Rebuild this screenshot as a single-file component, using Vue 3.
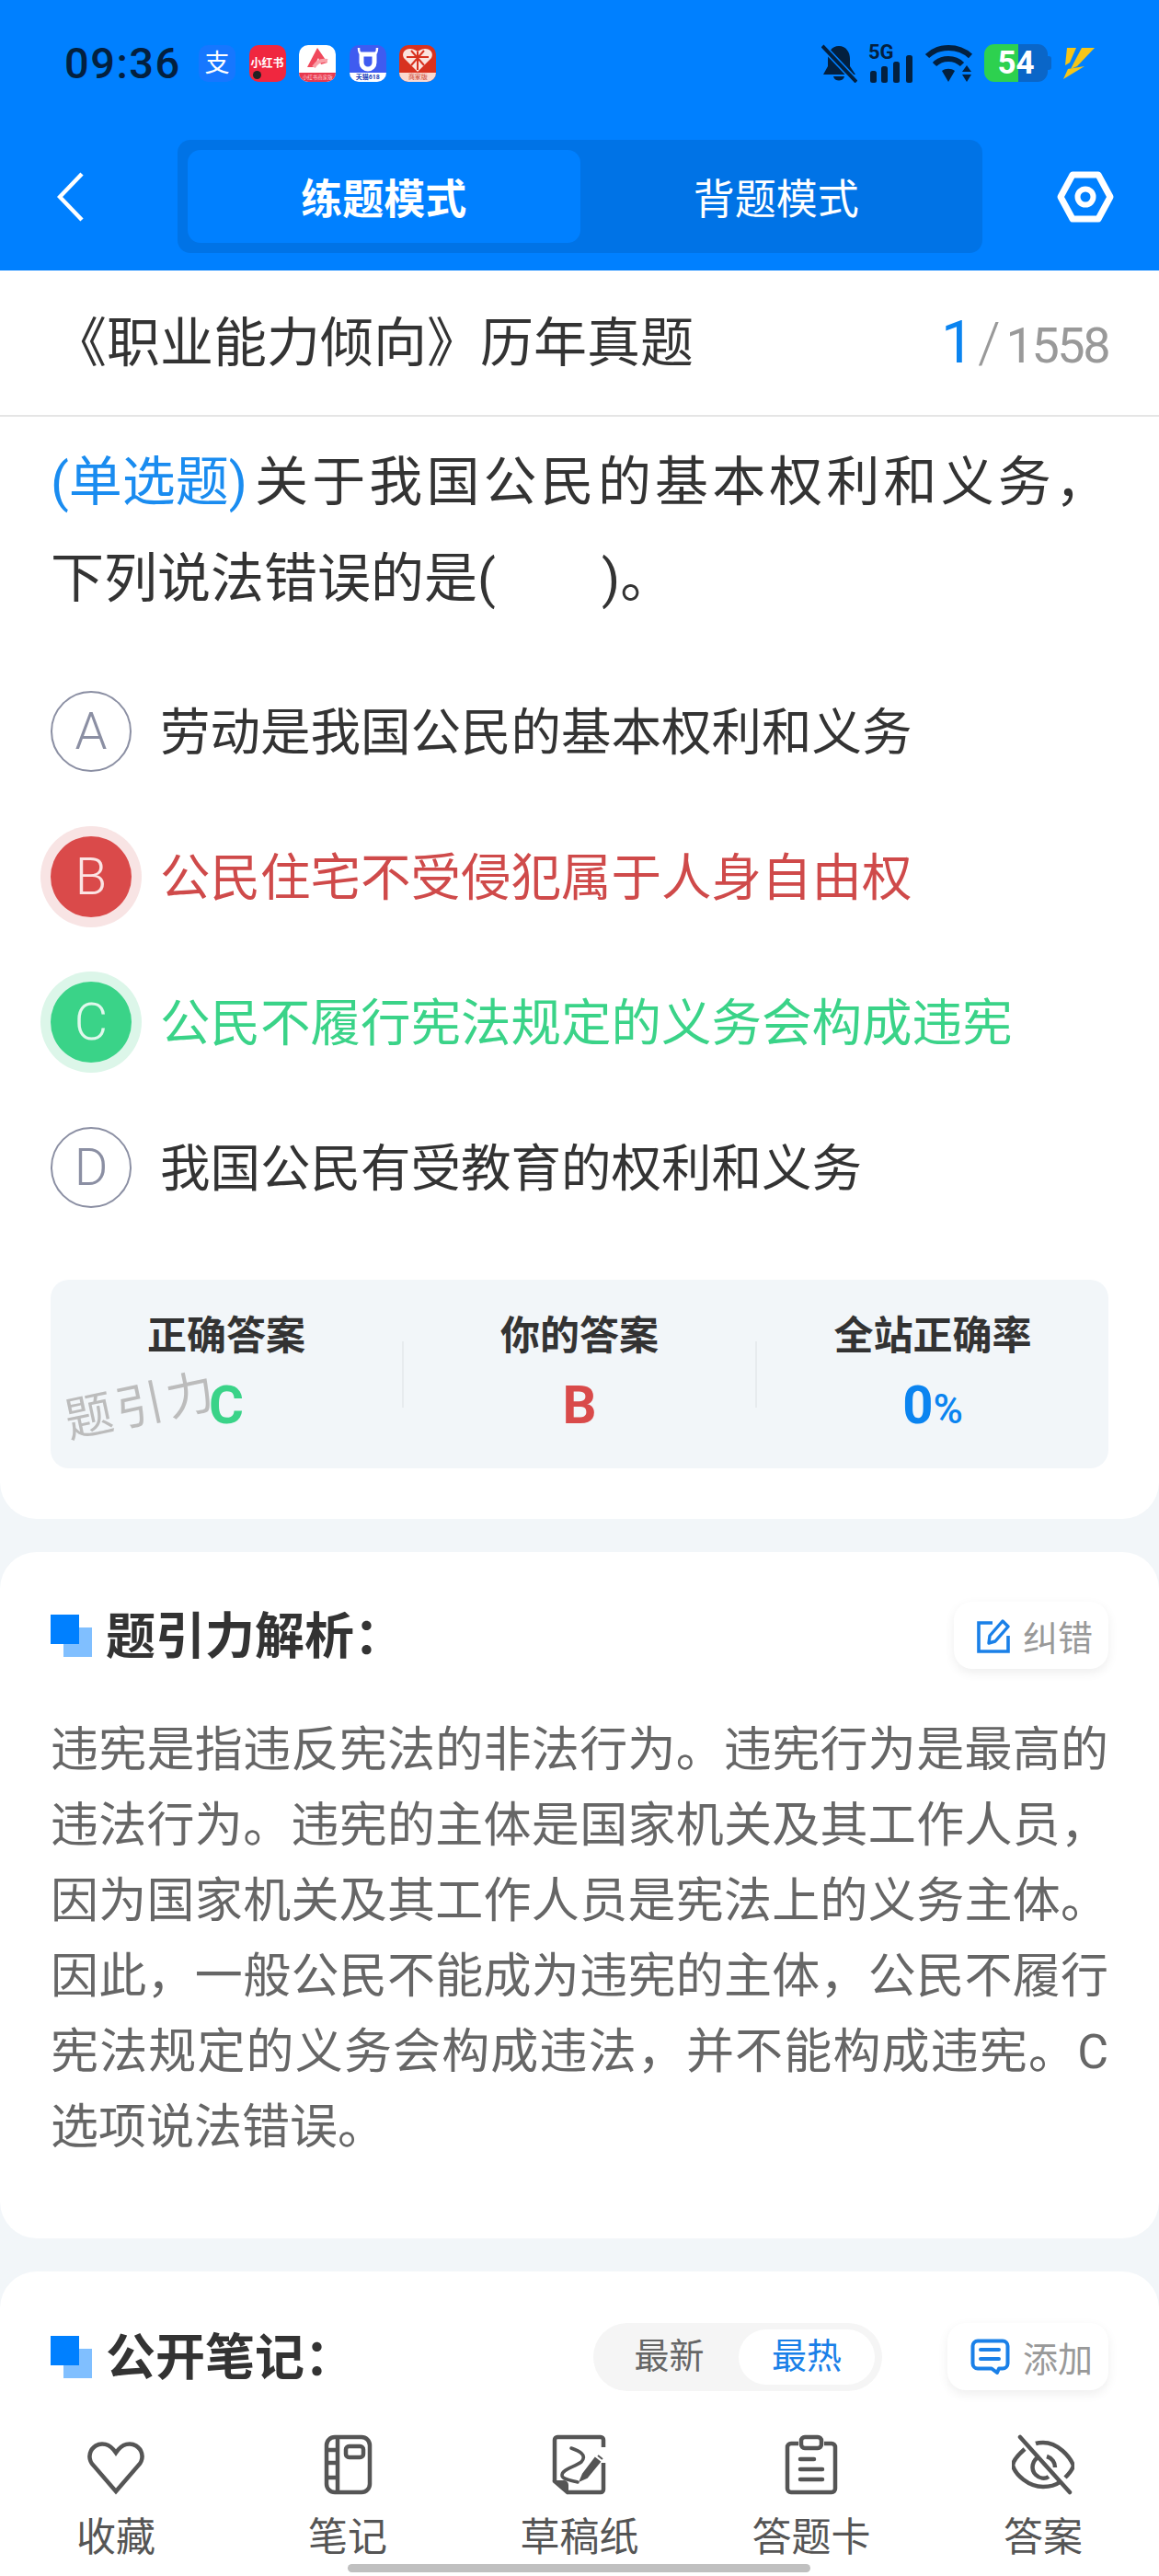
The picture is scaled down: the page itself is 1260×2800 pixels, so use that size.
<template>
  <div class="page">
    <header class="top">
      <div class="status">
        <span class="time">09:36</span>
        <div class="apps">
          <div class="app app-ali">支</div>
          <div class="app app-xhs">
            <span>小红书</span>
            <i class="dot"></i>
          </div>
          <div class="app app-shop">
            <svg width="40" height="30" viewBox="0 0 40 30">
              <path d="M20 3 L9 24 L16 24 L21 14 L24 21 L31 19 Z" fill="#f0485c" />
              <path d="M16 24 C20 17 26 16 31 17" stroke="#f9a0a8" stroke-width="4" fill="none" />
            </svg>
            <span class="band band-red">小红书商家版</span>
          </div>
          <div class="app app-tm">
            <svg width="40" height="30" viewBox="0 0 40 30">
              <path d="M10 3 C10 8 11 9 14 10 M30 3 C30 8 29 9 26 10" stroke="#fff" stroke-width="2.5" fill="none" />
              <path d="M13 10 H27 V19 A7 7 0 0 1 13 19 Z" fill="none" stroke="#fff" stroke-width="5" />
            </svg>
            <span class="band band-white">天猫618</span>
          </div>
          <div class="app app-pdd">
            <svg width="40" height="30" viewBox="0 0 40 30">
              <path d="M20 29 L5 14 C1 6 11 0 20 7 C29 0 39 6 35 14 Z" fill="#fbe3dd" />
              <path d="M20 7 V27 M8 13 H32 M13 6 L27 22 M27 6 L13 22" stroke="#d8321f" stroke-width="2" fill="none" />
            </svg>
            <span class="band band-pink">商家版</span>
          </div>
        </div>
        <div class="sys">
          <svg width="39" height="42" viewBox="0 0 39 42">
            <path d="M19 2 C27 2 31 9 31 16 V24 L37 33 H2 L7 24 V16 C7 9 11 2 19 2 Z" fill="#03203f" />
            <path d="M13 35 H25 C24 41 14 41 13 35 Z" fill="#03203f" />
            <path d="M2 3 L37 40" stroke="#0080ff" stroke-width="7" />
            <path d="M1 2 L38 41" stroke="#03203f" stroke-width="4" />
          </svg>
          <div class="signal">
            <span class="five-g">5G</span>
            <svg width="49" height="42" viewBox="0 0 49 42">
              <rect x="2" y="29" width="7" height="13" rx="2.5" fill="#03203f" />
              <rect x="14" y="24" width="7" height="18" rx="2.5" fill="#03203f" />
              <rect x="27" y="19" width="7" height="23" rx="2.5" fill="#03203f" />
              <rect x="41" y="12" width="7" height="30" rx="2.5" fill="#03203f" />
            </svg>
          </div>
          <svg width="53" height="42" viewBox="0 0 53 42">
            <path d="M3 13 C15 1 37 1 50 13" stroke="#03203f" stroke-width="6" fill="none" />
            <path d="M11 22 C19 14 33 14 41 22" stroke="#03203f" stroke-width="6" fill="none" />
            <path d="M19 29 C23 26 29 26 33 29 L26 41 Z" fill="#03203f" />
            <path d="M46 23 L51 30 H41 Z M41 33 H51 L46 41 Z" fill="#03203f" />
          </svg>
          <div class="battery">54</div>
          <svg class="bolt" width="35" height="36" viewBox="0 0 35 36">
            <path d="M5 1 H15 L8 17 L3 20 Z" fill="#f5c518" />
            <path d="M21 1 H35 L16 21 L9 24 L12 18 Z" fill="#f5c518" />
            <path d="M6 24 L24 21 L1 35 Z" fill="#f5c518" />
          </svg>
        </div>
      </div>
      <nav class="nav">
        <svg class="back" width="30" height="54" viewBox="0 0 30 54">
          <path d="M27 2 L3 27 L27 52" stroke="#fff" stroke-width="4.5" fill="none" />
        </svg>
        <div class="modes">
          <div v-for="m in modes" :key="m.name" class="mode" :class="{ active: m.active }">{{ m.name }}</div>
        </div>
        <svg class="gear" width="62" height="56" viewBox="0 0 62 56">
          <path d="M17 4 H45 L58 28 L45 52 H17 L4 28 Z" stroke="#fff" stroke-width="7" stroke-linejoin="round" fill="none" />
          <circle cx="31" cy="28" r="8.5" stroke="#fff" stroke-width="6" fill="none" />
        </svg>
      </nav>
    </header>

    <div class="paper-title">
      <span class="paper-name">《职业能力倾向》历年真题</span>
      <span class="counter"><b>1</b><i>/</i><em>1558</em></span>
    </div>

    <main class="content">
      <section class="card question">
        <div class="stem first">
          <span class="kind">(单选题)</span>
          <span class="stem-rest">关于我国公民的基本权利和义务，</span>
        </div>
        <p class="stem">下列说法错误的是(&nbsp;&nbsp;&nbsp;&nbsp;&nbsp;&nbsp;&nbsp;&nbsp;)。</p>
        <div class="options">
          <div v-for="o in options" :key="o.key" class="option" :class="o.state">
            <span class="letter">{{ o.key }}</span>
            <span class="option-text">{{ o.text }}</span>
          </div>
        </div>
        <div class="result">
          <div v-for="s in stats" :key="s.label" class="stat">
            <div class="stat-label">{{ s.label }}</div>
            <div class="stat-value" :class="s.cls">{{ s.value }}<small v-if="s.unit">{{ s.unit }}</small></div>
          </div>
          <span class="watermark">题引力</span>
        </div>
      </section>

      <section class="card analysis">
        <div class="card-head">
          <span class="mark"></span>
          <h2>题引力解析：</h2>
          <div class="action">
            <svg width="36" height="38" viewBox="0 0 36 38">
              <path d="M17 5 H2 V36 H34 V19" stroke="#1a80e8" stroke-width="3.6" fill="none" />
              <path d="M13 27 L14 19 L28 3 L34 9 L20 25 Z" stroke="#1a80e8" stroke-width="3.4" stroke-linejoin="round" fill="none" />
            </svg>
            <span>纠错</span>
          </div>
        </div>
        <p class="analysis-text">违宪是指违反宪法的非法行为。违宪行为是最高的违法行为。违宪的主体是国家机关及其工作人员，因为国家机关及其工作人员是宪法上的义务主体。因此，一般公民不能成为违宪的主体，公民不履行宪法规定的义务会构成违法，并不能构成违宪。C选项说法错误。</p>
      </section>

      <section class="card notes">
        <div class="card-head">
          <span class="mark"></span>
          <h2>公开笔记：</h2>
          <div class="sort">
            <span>最新</span>
            <span class="on">最热</span>
          </div>
          <div class="action add">
            <svg width="43" height="40" viewBox="0 0 43 40">
              <path d="M8 2.5 H35 A5.5 5.5 0 0 1 40.5 8 V27 A5.5 5.5 0 0 1 35 32.5 H31 L29 37 L23 32.5 H8 A5.5 5.5 0 0 1 2.5 27 V8 A5.5 5.5 0 0 1 8 2.5 Z" stroke="#1a80e8" stroke-width="4" stroke-linejoin="round" fill="none" />
              <path d="M11 12 H31 M11 22 H31" stroke="#1a80e8" stroke-width="4" stroke-linecap="round" />
            </svg>
            <span>添加</span>
          </div>
        </div>
      </section>
    </main>

    <footer class="tabbar">
      <div class="tab">
        <svg width="68" height="66" viewBox="0 0 68 66">
          <path d="M34 61 L8 31 C-2 16 20 -2 34 19 C48 -2 70 16 60 31 Z" transform="translate(0 1)" class="ic" />
        </svg>
        <span>收藏</span>
      </div>
      <div class="tab">
        <svg width="68" height="66" viewBox="0 0 68 66">
          <rect x="11" y="3" width="47" height="60" rx="9" class="ic" />
          <path d="M23 3 V63 M11 17 H23 M11 31 H23 M11 47 H23" class="ic" />
          <rect x="32" y="13" width="19" height="12" rx="3.5" class="ic" />
        </svg>
        <span>笔记</span>
      </div>
      <div class="tab">
        <svg width="68" height="66" viewBox="0 0 68 66">
          <path d="M60 14 V6 A3 3 0 0 0 57 3 H10 A3 3 0 0 0 7 6 V51 L21 63 H57 A3 3 0 0 0 60 60 V31" class="ic" />
          <path d="M7 51 H17 A4 4 0 0 1 21 55 V63 Z" fill="#555" stroke="#555" stroke-width="2" />
          <path d="M25 15 C33 18 43 22 36 30 C28 36 14 38 15 45 C16 49 24 50 32 52" class="ic thin" />
          <path d="M38 43 L35 50 L42 47 L56 30 L51 26 Z M54 23 L59 27" fill="#555" stroke="#555" stroke-width="2" />
        </svg>
        <span>草稿纸</span>
      </div>
      <div class="tab">
        <svg width="68" height="66" viewBox="0 0 68 66">
          <path d="M20 10 H12 A4 4 0 0 0 8 14 V59 A4 4 0 0 0 12 63 H56 A4 4 0 0 0 60 59 V14 A4 4 0 0 0 56 10 H48" class="ic" />
          <rect x="23" y="3" width="22" height="12" rx="4" class="ic" />
          <path d="M22 27 H37 M22 38 H46 M22 49 H46" class="ic" stroke-linecap="round" />
        </svg>
        <span>答题卡</span>
      </div>
      <div class="tab">
        <svg width="68" height="66" viewBox="0 0 68 66">
          <path d="M14 16 C5 24 1 30 1 34 C4 44 18 57 34 57 C42 57 48 55 52 52 M26 10 C29 9 31 9 34 9 C50 9 63 24 67 34 C66 38 62 43 58 47" class="ic" />
          <path d="M30 24 C22 28 20 38 26 44 C30 48 36 49 40 46 M38 24 C44 26 47 31 47 36" class="ic" />
          <path d="M9 3 L63 63" class="ic" stroke-linecap="round" />
        </svg>
        <span>答案</span>
      </div>
      <i class="home-bar"></i>
    </footer>
  </div>
</template>

<script setup>
const modes = [
  { name: '练题模式', active: true },
  { name: '背题模式', active: false }
]

const options = [
  { key: 'A', text: '劳动是我国公民的基本权利和义务', state: '' },
  { key: 'B', text: '公民住宅不受侵犯属于人身自由权', state: 'wrong' },
  { key: 'C', text: '公民不履行宪法规定的义务会构成违宪', state: 'right' },
  { key: 'D', text: '我国公民有受教育的权利和义务', state: '' }
]

const stats = [
  { label: '正确答案', value: 'C', cls: 'green' },
  { label: '你的答案', value: 'B', cls: 'red' },
  { label: '全站正确率', value: '0', unit: '%', cls: 'blue' }
]
</script>

<style>
html,
body {
  margin: 0;
  background: #f2f6f9;
}
</style>

<style scoped>
.page {
  width: 1260px;
  height: 2800px;
  display: flex;
  flex-direction: column;
  overflow: hidden;
  background: #f2f6f9;
  font-family: Roboto, "Noto Sans CJK SC", sans-serif;
  color: #333;
}

.top {
  height: 294px;
  flex: none;
  box-sizing: border-box;
  background: #0080ff;
  padding-top: 47px;
}

.status {
  height: 43px;
  display: flex;
  align-items: center;
  padding: 0 70px;
}

.time {
  width: 126px;
  font-size: 47px;
  font-weight: 500;
  letter-spacing: 1.5px;
  line-height: 43px;
  color: #03203f;
  white-space: nowrap;
}

.apps {
  display: flex;
  gap: 14.6px;
  margin-left: 20px;
}

.app {
  position: relative;
  width: 40px;
  height: 40px;
  border-radius: 10px;
  overflow: hidden;
  text-align: center;
  color: #fff;
}

.app svg {
  display: block;
}

.app-ali {
  background: #1677ff;
  font-size: 27px;
  line-height: 40px;
}

.app-xhs {
  background: #f0273f;
  font-size: 12px;
  font-weight: 700;
  line-height: 40px;
}

.dot {
  position: absolute;
  left: 4px;
  bottom: 3px;
  width: 9px;
  height: 9px;
  border-radius: 50%;
  background: #222;
}

.app-shop {
  background: #fff;
}

.app-tm {
  background: #3f5bf0;
}

.app-pdd {
  background: #d8321f;
}

.band {
  display: block;
  height: 10px;
  font-size: 7px;
  line-height: 10px;
  white-space: nowrap;
}

.band-red {
  background: #e8394e;
  color: #ffd5d8;
  font-size: 5.5px;
}

.band-white {
  background: #fff;
  color: #1d3fb8;
  font-weight: 700;
}

.band-pink {
  background: #fbd9d0;
  color: #c8402c;
}

.sys {
  display: flex;
  align-items: center;
  gap: 12px;
  margin-left: auto;
}

.signal {
  position: relative;
  height: 42px;
}

.signal svg {
  display: block;
}

.five-g {
  position: absolute;
  left: 0;
  top: -3px;
  font-size: 22px;
  font-weight: 700;
  line-height: 24px;
  color: #03203f;
}

.battery {
  position: relative;
  width: 69px;
  height: 41px;
  margin-right: 4px;
  border-radius: 11px;
  background: linear-gradient(90deg, #2dd14f 37px, #0a66c8 37px);
  color: #fff;
  font-size: 35px;
  font-weight: 700;
  line-height: 41px;
  text-align: center;
}

.battery::after {
  content: '';
  position: absolute;
  right: -4px;
  top: 13px;
  width: 4px;
  height: 15px;
  border-radius: 0 3px 3px 0;
  background: #0a66c8;
}

.nav {
  display: flex;
  align-items: center;
  margin-top: 62px;
  padding: 0 49px 0 62px;
}

.back {
  flex: none;
}

.modes {
  display: flex;
  width: 875px;
  height: 123px;
  box-sizing: border-box;
  margin-left: 101px;
  padding: 11px;
  border-radius: 14px;
  background: #0073e6;
}

.mode {
  flex: 1;
  display: flex;
  align-items: center;
  justify-content: center;
  border-radius: 14px;
  color: #fff;
  font-size: 45px;
}

.mode.active {
  background: #0080ff;
  font-weight: 700;
}

.gear {
  flex: none;
  margin-left: auto;
}

.paper-title {
  flex: none;
  height: 159px;
  box-sizing: border-box;
  display: flex;
  align-items: center;
  justify-content: space-between;
  padding: 0 55px 0 58px;
  background: #fff;
  border-bottom: 2px solid #e5e5e5;
}

.paper-name {
  font-size: 58px;
  line-height: 80px;
  color: #333;
}

.counter {
  display: flex;
  align-items: baseline;
  color: #999;
}

.counter b {
  font-size: 64px;
  font-weight: 400;
  color: #0b84f0;
  margin-right: 4px;
}

.counter i {
  font-style: normal;
  font-size: 62px;
  font-weight: 300;
  margin-right: 6px;
}

.counter em {
  font-style: normal;
  font-size: 54px;
  letter-spacing: -2.5px;
}

.content {
  flex: 1;
  min-height: 0;
}

.card {
  background: #fff;
  border-radius: 40px;
  margin-bottom: 36px;
}

.question {
  padding: 19px 55px 55px;
  border-radius: 0 0 40px 40px;
}

.stem {
  margin: 0;
  font-size: 58px;
  line-height: 105px;
  white-space: nowrap;
}

.stem.first {
  display: flex;
  gap: 8px;
}

.kind {
  flex: none;
  color: #1a8cf0;
}

.stem-rest {
  flex: 1;
  white-space: normal;
  text-align: justify;
  text-align-last: justify;
}

.options {
  margin-top: 34px;
}

.option {
  height: 158px;
  display: flex;
  align-items: center;
  gap: 31px;
}

.letter {
  width: 88px;
  height: 88px;
  flex: none;
  box-sizing: border-box;
  display: flex;
  align-items: center;
  justify-content: center;
  border: 2.5px solid #8b8fa3;
  border-radius: 50%;
  color: #8b8fa3;
  font-size: 56px;
  font-weight: 300;
}

.option-text {
  padding-bottom: 7px;
  font-size: 54.5px;
  white-space: nowrap;
}

.wrong .letter {
  border: 0;
  background: #da4a4a;
  box-shadow: 0 0 0 11px #f8e4e4;
  color: #fbe4e4;
}

.wrong .option-text {
  color: #cf4a4a;
}

.right .letter {
  border: 0;
  background: #3ad388;
  box-shadow: 0 0 0 11px #dcf6e9;
  color: #e0f8ec;
}

.right .option-text {
  color: #3ad388;
}

.result {
  position: relative;
  height: 205px;
  margin-top: 43px;
  display: flex;
  padding-top: 34px;
  box-sizing: border-box;
  border-radius: 20px;
  background: #f2f6f9;
}

.stat {
  flex: 1;
  text-align: center;
  border-left: 2px solid #e7ebee;
  height: 72px;
  margin-top: 33px;
}

.stat:first-child {
  border-left: 0;
}

.stat-label {
  margin-top: -34px;
  height: 56px;
  font-size: 43px;
  font-weight: 700;
  line-height: 56px;
}

.stat-value {
  margin-top: 12px;
  font-size: 58px;
  font-weight: 700;
  line-height: 70px;
}

.stat-value small {
  font-size: 44px;
  font-weight: 500;
}

.green {
  color: #3ad388;
}

.red {
  color: #d94a4a;
}

.blue {
  color: #0b84f0;
}

.watermark {
  position: absolute;
  left: 15px;
  top: 108px;
  font-size: 52px;
  letter-spacing: 4px;
  line-height: 60px;
  color: #bcbcbc;
  transform: rotate(-12deg);
}

.analysis {
  padding: 54px 55px 79px;
}

.notes {
  height: 400px;
  padding: 56px 55px 0;
  margin-bottom: 0;
}

.card-head {
  display: flex;
  align-items: center;
  height: 73px;
}

.mark {
  position: relative;
  flex: none;
  width: 45px;
  height: 46px;
}

.mark::before,
.mark::after {
  content: '';
  position: absolute;
  width: 31px;
  height: 32px;
}

.mark::after {
  right: 0;
  bottom: 0;
  background: #80bfff;
}

.mark::before {
  left: 0;
  top: 0;
  background: #0080ff;
  z-index: 1;
}

.card-head h2 {
  margin: 0 0 0 15px;
  padding-top: 4px;
  font-size: 54px;
  font-weight: 700;
  line-height: 69px;
}

.action {
  display: flex;
  align-items: center;
  gap: 14px;
  margin-left: auto;
  height: 73px;
  box-sizing: border-box;
  padding: 0 17px 0 25px;
  border-radius: 20px;
  background: #fff;
  box-shadow: 0 4px 12px rgba(0, 0, 0, 0.07);
  color: #999;
  font-size: 38px;
}

.add {
  margin-left: 0;
}

.analysis-text {
  margin: 48px 0 0;
  font-size: 52px;
  line-height: 82px;
  color: #666;
  text-align: justify;
}

.sort {
  display: flex;
  align-items: center;
  height: 74px;
  width: 314px;
  box-sizing: border-box;
  margin-left: auto;
  margin-right: 71px;
  padding: 7px 8px 7px 7px;
  border-radius: 37px;
  background: #f5f5f5;
  color: #666;
  font-size: 38px;
}

.sort span {
  flex: 1;
  height: 60px;
  line-height: 58px;
  text-align: center;
  border-radius: 30px;
}

.sort .on {
  flex: none;
  width: 148px;
  background: #fff;
  color: #1a80e8;
}

.tabbar {
  position: relative;
  flex: none;
  height: 175px;
  box-sizing: border-box;
  display: flex;
  padding-top: 21px;
  background: #fff;
}

.tab {
  flex: 1;
  display: flex;
  flex-direction: column;
  align-items: center;
  color: #555;
  font-size: 43px;
  line-height: 56px;
}

.tab span {
  margin-top: 18px;
}

.ic {
  fill: none;
  stroke: #555;
  stroke-width: 4.5;
}

.thin {
  stroke-width: 3.5;
  stroke-linecap: round;
}

.home-bar {
  position: absolute;
  left: 378px;
  bottom: 4px;
  width: 503px;
  height: 9px;
  border-radius: 5px;
  background: #c0c0c0;
}
</style>
